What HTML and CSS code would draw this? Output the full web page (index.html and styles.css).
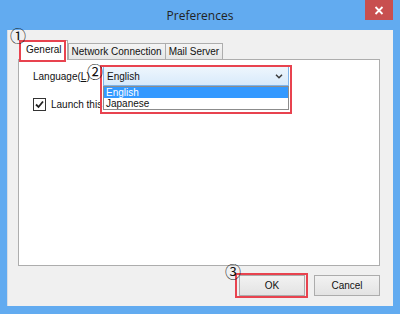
FILE: index.html
```html
<!DOCTYPE html>
<html>
<head>
<meta charset="utf-8">
<link rel="stylesheet" href="styles.css">
</head>
<body>
<div class="window">
  <div class="titlebar">
    <span></span>
    <div class="title">Preferences</div>
    <div class="close"><svg width="10" height="9" viewBox="0 0 10 9"><path d="M1.5 1 L8.5 8 M8.5 1 L1.5 8" stroke="#fff" stroke-width="1.8" fill="none"/></svg></div>
  </div>
  <div class="client">
    <div class="tabs">
      <div class="tab selected">General</div>
      <div class="tab">Network Connection</div>
      <div class="tab">Mail Server</div>
    </div>
    <div class="panel">
      <div class="row lang">
        <span class="label">Language(<u>L</u>) :</span>
        <div class="combo">
          <span class="combo-value">English</span>
          <svg class="chev" width="8" height="5" viewBox="0 0 8 5"><path d="M1 0.8 L4 3.8 L7 0.8" stroke="#3a3a3a" stroke-width="1.5" fill="none"/></svg>
          <ul class="dropdown">
            <li class="sel">English</li>
            <li>Japanese</li>
          </ul>
        </div>
      </div>
      <div class="row check">
        <span class="checkbox"><svg width="11" height="11" viewBox="0 0 11 11"><path d="M2 5.5 L4.5 8 L9 2.5" stroke="#222" stroke-width="1.8" fill="none"/></svg></span>
        <span>Launch this application at Windows startup</span>
      </div>
    </div>
    <div class="buttons">
      <div class="btn">OK</div>
      <div class="btn">Cancel</div>
    </div>
  </div>
  <div class="mark mark-tab"></div>
  <div class="mark mark-combo"></div>
  <div class="mark mark-ok"></div>
  <span class="num num1">①</span>
  <span class="num num2">②</span>
  <span class="num num3">③</span>
</div>
</body>
</html>
```
FILE: styles.css
```css
html, body {
  margin: 0;
  padding: 0;
}
body {
  width: 400px;
  height: 314px;
  overflow: hidden;
  font-family: "Liberation Sans", Arial, sans-serif;
  font-size: 10px;
  color: #111;
}
.window {
  position: relative;
  width: 400px;
  height: 314px;
  background: #62abf0;
  display: flex;
  flex-direction: column;
}
.titlebar {
  height: 30px;
  display: grid;
  grid-template-columns: 1fr auto 1fr;
  align-items: center;
}
.title {
  font-family: "Open Sans", "Liberation Sans", sans-serif;
  font-size: 12px;
  color: #222;
  padding-top: 1px;
}
.close {
  justify-self: end;
  align-self: start;
  margin-right: 7px;
  width: 28px;
  height: 20px;
  background: #c84f4f;
  display: flex;
  align-items: center;
  justify-content: center;
}
.client {
  flex: 1;
  margin: 0 7px 8px 7px;
  padding: 10px 13px 10px 11px;
  background: #f0f0f0;
  display: flex;
  flex-direction: column;
  box-shadow: inset 1px 0 0 #d6dde6;
}
.tabs {
  display: flex;
  align-items: flex-end;
  height: 19px;
  padding-left: 2px;
  position: relative;
  z-index: 1;
}
.tab {
  box-sizing: border-box;
  height: 16px;
  line-height: 15px;
  padding: 0 3px;
  border: 1px solid #adadad;
  border-bottom: none;
  background: linear-gradient(#f4f4f4, #e6e6e6);
  margin-left: -1px;
  white-space: nowrap;
}
.tab.selected {
  height: 20px;
  line-height: 18px;
  margin-left: 0;
  margin-right: 1px;
  margin-bottom: -1px;
  background: #fff;
  padding: 0 5px;
  position: relative;
  z-index: 1;
}
.panel {
  box-sizing: border-box;
  height: 207px;
  border: 1px solid #adadad;
  background: #fff;
  padding: 6px 14px;
}
.row {
  display: flex;
  align-items: center;
}
.lang .label {
  width: 70px;
  white-space: nowrap;
}
.combo {
  position: relative;
  box-sizing: border-box;
  width: 186px;
  height: 20px;
  border: 1px solid #7eb4ea;
  background: linear-gradient(#eef6fd, #d8eafb);
  display: flex;
  align-items: center;
  justify-content: space-between;
  padding: 0 5px 0 3px;
}
.dropdown {
  position: absolute;
  top: 19px;
  left: -1px;
  width: 186px;
  box-sizing: border-box;
  margin: 0;
  padding: 0;
  list-style: none;
  background: #fff;
  border: 1px solid #8c8c8c;
  z-index: 2;
}
.dropdown li {
  height: 11px;
  line-height: 11px;
  padding-left: 2px;
}
.dropdown li.sel {
  background: #3399ff;
  color: #fff;
}
.check {
  margin-top: 12px;
  gap: 5px;
}
.checkbox {
  box-sizing: border-box;
  width: 13px;
  height: 13px;
  border: 1px solid #333;
  background: #fff;
  display: flex;
  align-items: center;
  justify-content: center;
}
.buttons {
  display: flex;
  justify-content: flex-end;
  gap: 9px;
  margin-top: 9px;
}
.btn {
  box-sizing: border-box;
  width: 66px;
  height: 21px;
  border: 1px solid #acacac;
  background: linear-gradient(#f2f2f2, #e3e3e3);
  display: flex;
  align-items: center;
  justify-content: center;
}
.mark {
  position: absolute;
  box-sizing: border-box;
  border: 2px solid #e8434f;
  z-index: 5;
}
.mark-tab {
  left: 19px;
  top: 40px;
  width: 47px;
  height: 22px;
}
.mark-combo {
  left: 100px;
  top: 65px;
  width: 192px;
  height: 49px;
}
.mark-ok {
  left: 235px;
  top: 273px;
  width: 73px;
  height: 25px;
}
.num {
  position: absolute;
  font-family: "Noto Sans CJK JP", "DejaVu Sans", sans-serif;
  font-size: 16px;
  line-height: 16px;
  color: #111;
  z-index: 6;
}
.num1 { left: 10px; top: 27px; }
.num2 { left: 87px; top: 63px; }
.num3 { left: 225px; top: 263px; }
```
